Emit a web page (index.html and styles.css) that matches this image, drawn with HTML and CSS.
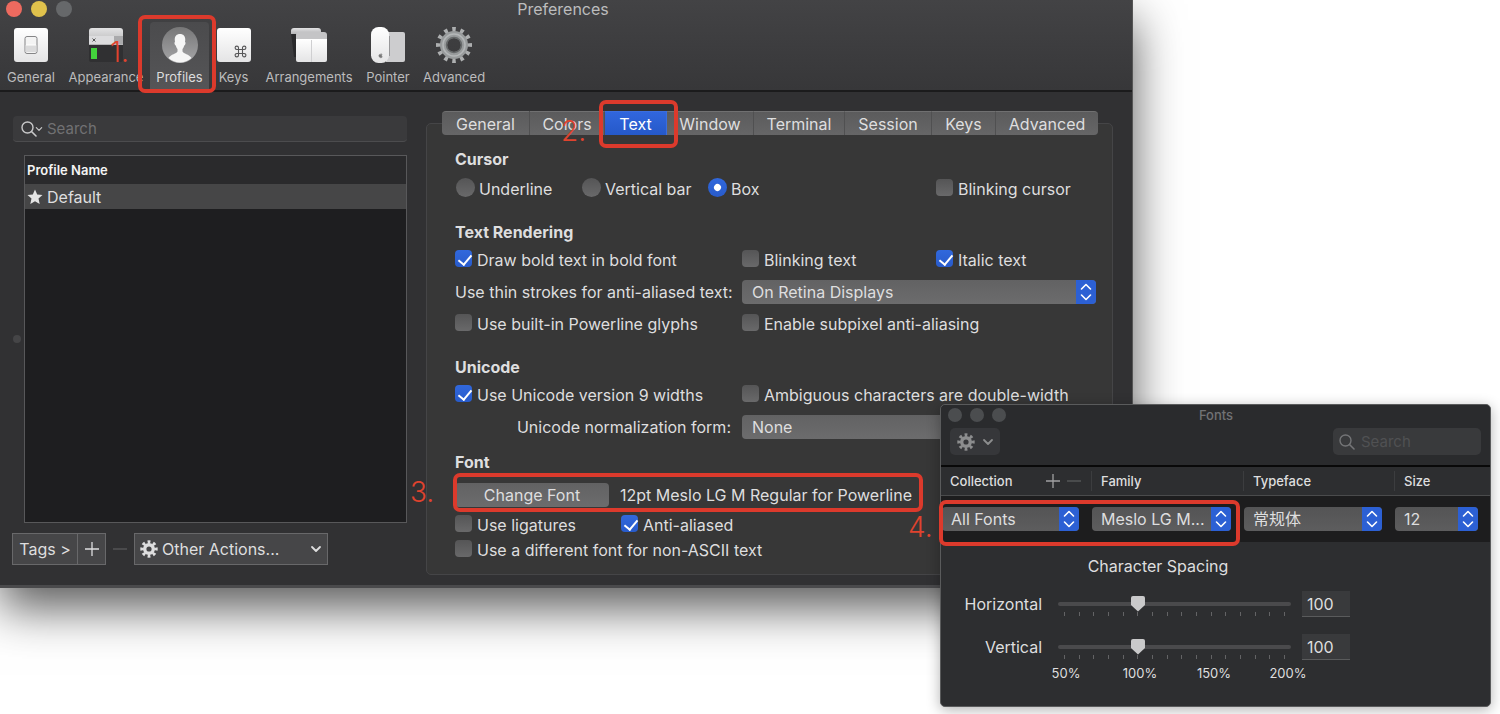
FILE: index.html
```html
<!DOCTYPE html>
<html lang="en">
<head>
<meta charset="utf-8">
<title>Preferences</title>
<link rel="stylesheet" href="styles.css">
</head>
<body>
<svg class="defs" aria-hidden="true">
  <symbol id="stepper" viewBox="0 0 20 24"><path d="M5.500 9 10 4.500l4.500 4.500M5.500 15 10 19.500l4.500-4.500" fill="none" stroke="#fff" stroke-width="1.600" stroke-linecap="round" stroke-linejoin="round"/></symbol>
  <symbol id="gear" viewBox="0 0 18 18"><circle cx="9" cy="9" r="7" fill="none" stroke="currentColor" stroke-width="3.400" pathLength="16" stroke-dasharray="1 1" stroke-dashoffset="0.500"/><circle cx="9" cy="9" r="4.300" fill="none" stroke="currentColor" stroke-width="3.400"/></symbol>
  <symbol id="chevron" viewBox="0 0 12 8"><path d="M2 2l4 4 4-4" fill="none" stroke="currentColor" stroke-width="1.800" stroke-linecap="round" stroke-linejoin="round"/></symbol>
  <symbol id="plus" viewBox="0 0 14 14"><path d="M7 0v14M0 7h14" stroke="currentColor" stroke-width="1.300"/></symbol>
  <symbol id="minus" viewBox="0 0 14 14"><path d="M0 7h14" stroke="currentColor" stroke-width="1.300"/></symbol>
  <symbol id="lens" viewBox="0 0 16 16"><circle cx="6.500" cy="6.500" r="5.500" fill="none" stroke="currentColor" stroke-width="1.400"/><path d="M10.500 10.500 15 15" stroke="currentColor" stroke-width="1.600" stroke-linecap="round"/></symbol>
  <linearGradient id="paper" x2="0" y2="1"><stop offset="0" stop-color="#fff"/><stop offset="1" stop-color="#e4e4e5"/></linearGradient>
  <linearGradient id="bar" x2="0" y2="1"><stop offset="0" stop-color="#e2e2e3"/><stop offset="1" stop-color="#b4b4b6"/></linearGradient>
  <linearGradient id="disc" x2="0" y2="1"><stop offset="0" stop-color="#777778"/><stop offset="1" stop-color="#a5a5a7"/></linearGradient>
</svg>

<main class="desktop">
  <section class="prefs" aria-label="Preferences">
    <header class="prefs-head">
      <div class="titlebar">
        <span class="lights"><i class="light close"></i><i class="light minimize"></i><i class="light"></i></span>
        <h1>Preferences</h1>
      </div>
      <nav class="toolbar">
        <button class="tool"><svg viewBox="0 0 36 36"><rect x="1" y="1" width="34" height="34" rx="3" fill="url(#paper)"/><rect x="12" y="9.500" width="12" height="17" rx="2" fill="#f3f3f3" stroke="#858587" stroke-width="1"/><path d="M12.500 18h11v7h-11z" fill="#dadadb"/><path d="M13 18h10" stroke="#fff"/></svg>General</button>
        <button class="tool"><svg viewBox="0 0 36 36"><path d="M1 17h34v16a2 2 0 0 1-2 2H3a2 2 0 0 1-2-2z" fill="#303032"/><path d="M1 4a3 3 0 0 1 3-3h28a3 3 0 0 1 3 3v14H1z" fill="url(#bar)"/><path d="M1 9h34v8H1z" fill="#dcdcde"/><path d="M26 9h9v8h-9z" fill="#aaaaac"/><path d="m4.500 11.500 3 3m0-3-3 3" stroke="#555"/><path d="M3 21h6v11H3z" fill="#43d33c"/></svg>Appearance</button>
        <button class="tool active"><svg viewBox="0 0 36 36"><circle cx="18" cy="18" r="18" fill="url(#disc)"/><path d="M18 7c-4 0-6 3-5 8-1 0-.5 3 .8 3.500.4 2 1.200 2.800 1.700 3.500v2.500C14.500 27 9 27 6.500 31a17 17 0 0 0 23 0C27 27 21.500 27 20.500 24.500V22c.6-.8 1.300-1.500 1.700-3.500 1.300-.5 1.800-3.500.8-3.500 1-5-1-8-5-8z" fill="#f6f6f6"/></svg>Profiles<span class="mark mark-profiles"></span><span class="step step-one">1.</span></button>
        <button class="tool"><svg viewBox="0 0 36 36"><rect x="1" y="1" width="34" height="34" rx="3" fill="url(#paper)"/><path d="M22.500 22.500h4v4h-4zM22.500 22.500h-1.700a1.700 1.700 0 1 1 1.700-1.700zM26.500 22.500v-1.700a1.700 1.700 0 1 1 1.700 1.700zM26.500 26.500h1.700a1.700 1.700 0 1 1-1.700 1.700zM22.500 26.500v1.700a1.700 1.700 0 1 1-1.700-1.700z" fill="none" stroke="#565658" stroke-width="1.100"/></svg>Keys</button>
        <button class="tool"><svg viewBox="0 0 36 36"><path d="M0 6h8v24H3z" fill="#29292b"/><path d="M0 7V4a3 3 0 0 1 3-3h24a3 3 0 0 1 3 3v3z" fill="url(#bar)"/><path d="M5 13V8a3 3 0 0 1 3-3h25a3 3 0 0 1 3 3v5z" fill="#c4c4c6"/><path d="M5 12h31v21a2 2 0 0 1-2 2H7a2 2 0 0 1-2-2z" fill="url(#paper)"/><path d="M20.500 13v22" stroke="#cfcfd1"/></svg>Arrangements</button>
        <button class="tool"><svg viewBox="0 0 36 36"><path d="M16 5h17a2 2 0 0 1 2 2v26a2 2 0 0 1-2 2H16z" fill="#cdcdcf"/><rect x="1" y="0" width="18" height="36" rx="7.500" fill="url(#paper)"/><path d="M19.500 9v20" stroke="#98989a" stroke-width="1"/><path d="M9.500 27.500c1 .3 1.600-.3 2.600 0-.8 1-.6 1.600.2 2.200-.8 1.600-1.800 1.400-3.200 0-.4-1.200-.2-1.900.4-2.200zM10.800 27l.6-1" fill="#777" stroke="#777" stroke-width=".5"/></svg>Pointer</button>
        <button class="tool"><svg viewBox="0 0 36 36"><circle cx="18" cy="18" r="15.500" fill="none" stroke="#adafb0" stroke-width="5" pathLength="36" stroke-dasharray="1.300 1.700" stroke-dashoffset="0.650"/><circle cx="18" cy="18" r="10.500" fill="none" stroke="#989b9c" stroke-width="7"/><circle cx="18" cy="18" r="11" fill="none" stroke="#b4b7b8" stroke-width="1.500"/><circle cx="18" cy="18" r="7.500" fill="none" stroke="#66696a" stroke-width="1.500"/></svg>Advanced</button>
      </nav>
    </header>

    <div class="prefs-body">
      <aside class="sidebar">
        <label class="search"><svg class="lens"><use href="#lens"/></svg><svg class="caret"><use href="#chevron"/></svg><input type="search" placeholder="Search" aria-label="Search profiles"></label>
        <div class="profiles-wrap">
          <span class="grip"></span>
          <div class="profiles">
            <table>
              <thead><tr><th>Profile Name</th></tr></thead>
              <tbody><tr><td><span class="profile"><svg viewBox="0 0 16 16"><path d="m8 .5 2.200 5 5.300.5-4 3.600 1.200 5.400L8 12.200 3.300 15l1.200-5.400L.5 6l5.300-.5z" fill="#e4e4e4"/></svg>Default</span></td></tr></tbody>
            </table>
          </div>
        </div>
        <div class="actions">
          <button class="flat tags">Tags &gt;</button>
          <button class="flat icon" aria-label="Add profile"><svg><use href="#plus"/></svg></button>
          <button class="flat icon off" aria-label="Remove profile" disabled><svg><use href="#minus"/></svg></button>
          <button class="flat other"><svg class="gear"><use href="#gear"/></svg><span>Other Actions...</span><svg class="caret"><use href="#chevron"/></svg></button>
        </div>
      </aside>

      <section class="panel">
        <nav class="tabs">
          <button>General</button><button>Colors</button><button class="selected">Text<span class="mark mark-text"></span><span class="step step-two">2.</span></button><button>Window</button><button>Terminal</button><button>Session</button><button>Keys</button><button>Advanced</button>
        </nav>
        <form class="settings">
          <h2>Cursor</h2>
          <div class="row">
            <div class="radios">
              <label class="check"><input type="radio" name="cursor">Underline</label>
              <label class="check"><input type="radio" name="cursor">Vertical bar</label>
              <label class="check"><input type="radio" name="cursor" checked>Box</label>
            </div>
            <label class="check"><input type="checkbox">Blinking cursor</label>
          </div>

          <h2 class="spaced">Text Rendering</h2>
          <div class="row">
            <label class="check"><input type="checkbox" checked>Draw bold text in bold font</label>
            <label class="check"><input type="checkbox">Blinking text</label>
            <label class="check"><input type="checkbox" checked>Italic text</label>
          </div>
          <div class="row">
            <label class="caption" for="strokes">Use thin strokes for anti-aliased text:</label>
            <span class="select wide"><select id="strokes"><option>On Retina Displays</option></select><svg><use href="#stepper"/></svg></span>
          </div>
          <div class="row">
            <label class="check"><input type="checkbox">Use built-in Powerline glyphs</label>
            <label class="check double"><input type="checkbox">Enable subpixel anti-aliasing</label>
          </div>

          <h2 class="spaced">Unicode</h2>
          <div class="row">
            <label class="check"><input type="checkbox" checked>Use Unicode version 9 widths</label>
            <label class="check double"><input type="checkbox">Ambiguous characters are double-width</label>
          </div>
          <div class="row">
            <label class="caption" for="normal">Unicode normalization form:</label>
            <span class="select wide"><select id="normal"><option>None</option></select><svg><use href="#stepper"/></svg></span>
          </div>

          <h2 class="font-title">Font</h2>
          <div class="font-row">
            <button type="button" class="change">Change Font</button><span>12pt Meslo LG M Regular for Powerline</span>
            <span class="mark mark-font"></span><span class="step step-three">3.</span>
          </div>
          <div class="font-options">
            <label class="check"><input type="checkbox">Use ligatures</label>
            <label class="check"><input type="checkbox" checked>Anti-aliased</label>
            <label class="check full"><input type="checkbox">Use a different font for non-ASCII text</label>
          </div>
        </form>
      </section>
    </div>
  </section>

  <section class="fonts" aria-label="Fonts">
    <header class="fonts-head">
      <div class="fonts-title"><span class="lights"><i class="light"></i><i class="light"></i><i class="light"></i></span><h2>Fonts</h2></div>
      <div class="fonts-tools">
        <button class="gear-menu" aria-label="Font actions"><svg class="gear"><use href="#gear"/></svg><svg class="caret"><use href="#chevron"/></svg></button>
        <label class="font-search"><svg class="lens"><use href="#lens"/></svg><input type="search" placeholder="Search" aria-label="Search fonts"></label>
      </div>
    </header>
    <div class="columns heads">
      <div class="head"><label for="collection">Collection</label><span class="pm"><svg><use href="#plus"/></svg><svg class="dim"><use href="#minus"/></svg></span></div>
      <div class="head"><label for="family">Family</label></div>
      <div class="head"><label for="typeface">Typeface</label></div>
      <div class="head"><label for="size">Size</label></div>
    </div>
    <div class="columns picks">
      <span class="select"><select id="collection"><option>All Fonts</option></select><svg><use href="#stepper"/></svg></span>
      <span class="select"><select id="family"><option>Meslo LG M...</option></select><svg><use href="#stepper"/></svg></span>
      <span class="select"><select id="typeface"><option>常规体</option></select><svg><use href="#stepper"/></svg></span>
      <span class="select"><select id="size"><option>12</option></select><svg><use href="#stepper"/></svg></span>
      <span class="mark mark-picks"></span><span class="step step-four">4.</span>
    </div>
    <div class="spacing">
      <h3>Character Spacing</h3>
      <label for="hs">Horizontal</label>
      <div class="slider"><input id="hs" type="range" min="50" max="200" value="100"><div class="ticks"><i></i><i></i><i></i><i></i><i></i><i></i><i></i><i></i><i></i><i></i><i></i><i></i><i></i><i></i><i></i><i></i></div></div>
      <input class="number" type="text" value="100" aria-label="Horizontal percent">
      <label for="vs">Vertical</label>
      <div class="slider"><input id="vs" type="range" min="50" max="200" value="100"><div class="ticks"><i></i><i></i><i></i><i></i><i></i><i></i><i></i><i></i><i></i><i></i><i></i><i></i><i></i><i></i><i></i><i></i></div></div>
      <input class="number" type="text" value="100" aria-label="Vertical percent">
      <div class="scale"><span>50%</span><span>100%</span><span>150%</span><span>200%</span></div>
    </div>
  </section>
</main>
</body>
</html>
```

FILE: styles.css
```css
* { box-sizing: border-box; }
body {
  margin: 0;
  background: #fff;
  color: #dededf;
  font: 16px/20px Inter, "Noto Sans CJK SC", sans-serif;
}
button, input, select { font: inherit; color: inherit; margin: 0; padding: 0; border: 0; background: none; }
button { white-space: nowrap; }
h1, h2, h3 { margin: 0; font-size: 16px; line-height: 20px; }
svg { display: block; flex: none; }
input::-webkit-search-cancel-button { display: none; }
.defs { position: absolute; width: 0; height: 0; }
.desktop { position: relative; min-height: 100vh; overflow: hidden; }

/* Preferences window */
.prefs {
  margin-right: 367px;
  background: #313133;
  border-right: 1px solid #555;
  border-bottom: 3px solid #4a4a4c;
  box-shadow: 0 20px 45px rgba(0, 0, 0, .65);
}
.prefs-head {
  background: linear-gradient(#434345, #373739);
  border-bottom: 2px solid #1b1b1c;
}
.titlebar { display: grid; grid-template-columns: 1fr auto 1fr; align-items: center; height: 20px; padding: 0 12px 2px 6px; }
.titlebar h1 { font-weight: 400; line-height: 18px; color: #bcbcbd; }
.lights { display: flex; gap: 9px; }
.light { width: 16px; height: 16px; border-radius: 50%; background: #66686a; }
.close { background: #ed6a5f; }
.minimize { background: #e0c24c; }
.toolbar { display: grid; grid-template-columns: 62px 88px 59px 49px 102px 56px 76px; height: 70px; padding-top: 2px; }
.tool {
  position: relative;
  display: flex;
  flex-direction: column;
  align-items: center;
  gap: 5px;
  padding-top: 5px;
  font-size: 13px;
  line-height: 18px;
  color: #bcbcbd;
}
.tool svg { width: 36px; height: 36px; }
.active { background: linear-gradient(#4b4b4d, #555557); border-radius: 4px 4px 0 0; color: #dcdcdd; z-index: 1; }

/* Numbered call-outs */
.mark { position: absolute; border: 4px solid #dc3a2c; border-radius: 7px; pointer-events: none; z-index: 2; }
.step { position: absolute; color: #e0432e; font-size: 28px; font-weight: 300; line-height: 28px; z-index: 3; }
.mark-profiles { inset: -7px -7px -3px -12px; }
.step-one { left: -40px; top: 16px; }
.mark-text { inset: -12px -12px -13px -6px; }
.step-two { left: -44px; top: 5px; }
.mark-font { left: -2px; top: -10px; width: 470px; height: 39px; }
.step-three { left: -45px; top: -5px; }
.mark-picks { left: -2px; top: 4px; width: 301px; height: 46px; }
.step-four { left: -33px; top: 17px; }

/* Sidebar */
.prefs-body { display: grid; grid-template-columns: 394px minmax(0, 1fr); gap: 19px; padding: 19px 19px 10px 13px; }
.sidebar { display: flex; flex-direction: column; padding-top: 5px; }
.search { display: flex; align-items: center; height: 26px; padding-left: 8px; border-radius: 4px; background: #3a3a3c; border-bottom: 1px solid #4c4c4e; }
.lens { width: 16px; height: 16px; color: #c8c8c9; }
.search .caret { width: 8px; height: 6px; margin-left: -2px; color: #c8c8c9; }
.search input { flex: 1; min-width: 0; margin-left: 4px; outline: 0; font-size: 15px; }
input::placeholder { color: #717173; }
.profiles-wrap { display: flex; flex: 1; align-items: center; gap: 3px; margin-top: 13px; }
.grip { width: 8px; height: 8px; border-radius: 50%; background: #454547; }
.profiles { flex: 1; align-self: stretch; background: #1e1e20; border: 1px solid #58585a; }
table { width: 100%; border-collapse: collapse; }
th { height: 28px; padding: 0 2px; background: #2a2a2c; color: #f4f4f4; font-size: 13px; font-weight: 600; text-align: left; }
td { height: 25px; padding: 0 2px; background: #464647; }
.profile { display: flex; align-items: center; gap: 4px; }
.profile svg { width: 16px; height: 16px; }
.actions { display: flex; height: 32px; margin: 10px 0 10px -1px; }
.flat { display: flex; align-items: center; justify-content: center; background: #464648; border: 1px solid #68686a; }
.tags { width: 66px; font-size: 16px; }
.icon { width: 29px; margin-left: -1px; }
.icon svg { width: 14px; height: 14px; }
.off { width: 28px; margin: 0; border: 0; background: none; color: #58585a; }
.other { width: 194px; padding: 0 5px; gap: 4px; }
.other span { flex: 1; text-align: left; }
.gear { width: 18px; height: 18px; }
.caret { width: 12px; height: 8px; }

/* Settings panel */
.panel { margin-top: 12px; border: 1px solid #454547; border-radius: 5px; background: #373737; }
.tabs { display: grid; grid-template-columns: 88fr 75fr 62fr 87fr 91fr 87fr 64fr 102fr; height: 24px; margin: -13px 14px 0 15px; }
.tabs button { position: relative; background: linear-gradient(#5b5b5c, #666667); border-top: 1px solid #707071; border-right: 1px solid #505051; }
.tabs button:first-child { border-radius: 4px 0 0 4px; }
.tabs button:last-child { border-radius: 0 4px 4px 0; border-right: 0; }
.tabs .selected { background: linear-gradient(#3166dd, #2559c9); border-color: #3a6ee0; color: #fff; z-index: 2; }
.settings { padding: 14px 16px 14px 28px; }
.settings h2 { font-weight: 700; }
.settings .spaced { margin-top: 23px; }
.settings .font-title { margin-top: 13px; }
.row { display: grid; grid-template-columns: 287px 194px minmax(0, 1fr); align-items: center; margin-top: 10px; }
.row .radios { display: grid; grid-template-columns: 126px 126px 1fr; grid-column: span 2; padding-left: 1px; }
.row .double, .row .wide { grid-column: span 2; }
h2 + .row { margin-top: 8px; }
h2:first-child + .row { margin-top: 10px; }
.check { display: flex; align-items: center; gap: 5px; height: 20px; white-space: nowrap; }
.check input { position: relative; flex: none; width: 17px; height: 17px; margin-bottom: 3px; appearance: none; border-radius: 4px; background: linear-gradient(#555556, #69696a); }
.check input[type="radio"] { width: 19px; height: 19px; border-radius: 50%; }
.radios .check { gap: 4px; }
.check input:checked { background: linear-gradient(#3168dc, #285bcb); }
.check input:checked::before { content: ""; position: absolute; left: 6px; top: 2px; width: 6px; height: 11px; border: solid #fff; border-width: 0 2px 2px 0; transform: rotate(40deg); }
.check input[type="radio"]:checked::before { left: 6px; top: 6px; width: 7px; height: 7px; border: 0; border-radius: 50%; background: #fff; }
.caption { padding-right: 11px; text-align: right; white-space: nowrap; }
.select { display: grid; grid-template-columns: minmax(0, 1fr) 20px; height: 24px; overflow: hidden; border-radius: 4px; background: linear-gradient(#626263, #6c6c6d); }
.select select { grid-area: 1 / 1 / 2 / 3; width: 100%; padding: 0 20px 0 10px; appearance: none; line-height: 24px; outline: 0; }
.select option { background: #373737; }
.select svg { grid-area: 1 / 2; width: 20px; height: 24px; background: #2c60d4; pointer-events: none; }
.font-row { position: relative; display: flex; align-items: center; gap: 11px; margin-top: 11px; white-space: nowrap; }
.change { width: 154px; height: 24px; border-radius: 4px; background: linear-gradient(#626263, #6c6c6d); }
.font-options { display: grid; grid-template-columns: 166px 1fr; row-gap: 5px; margin-top: 8px; }
.full { grid-column: span 2; }

/* Fonts window */
.fonts {
  position: absolute;
  right: 9px;
  top: 404px;
  width: 551px;
  padding-bottom: 23px;
  border: 1px solid #5a5b5c;
  border-radius: 5px;
  background: #2d2e30;
  box-shadow: 0 3px 14px rgba(0, 0, 0, .3);
}
.fonts-head { height: 62px; background: #2a2b2d; border-bottom: 2px solid #090909; border-radius: 5px 5px 0 0; }
.fonts-title { display: grid; grid-template-columns: 1fr auto 1fr; align-items: center; height: 20px; padding: 0 6px 0 7px; }
.fonts-title h2 { font-size: 13px; font-weight: 500; color: #717274; }
.fonts .lights { gap: 8px; }
.fonts .light { width: 14px; height: 14px; background: #4b4d4f; }
.fonts-tools { display: flex; justify-content: space-between; padding: 3px 9px 0; }
.gear-menu { display: flex; align-items: center; justify-content: center; gap: 7px; width: 50px; height: 27px; border-radius: 5px; background: #36373a; color: #8c8d8e; }
.font-search { display: flex; align-items: center; gap: 6px; width: 148px; height: 27px; padding-left: 6px; border-radius: 5px; background: #393a3c; }
.font-search .lens { color: #747577; }
.font-search input { min-width: 0; width: 100%; font-size: 15px; outline: 0; }
.font-search input::placeholder { color: #505153; }
.columns { position: relative; display: grid; grid-template-columns: 150px 152px 151px minmax(0, 1fr); }
.heads { height: 29px; align-items: center; border-bottom: 1px solid #4a4b4c; }
.head { display: flex; justify-content: space-between; padding: 0 10px 0 9px; font-size: 13px; font-weight: 500; }
.head + .head { border-left: 1px solid #3c3d3f; }
.pm { display: flex; align-items: center; gap: 7px; }
.pm svg { width: 14px; height: 14px; color: #a0a0a1; }
.pm .dim { color: #5a5b5c; }
.picks { padding: 11px 0; background: #1d1d1e; }
.picks .select { margin: 0 12px 0 1px; background: linear-gradient(#545455, #5d5d5e); }
.picks .select select { padding-left: 9px; }
.spacing { display: grid; grid-template-columns: 101px 233px 48px; column-gap: 16px; align-items: center; margin-top: 14px; }
.spacing h3 { grid-column: 1 / 4; margin: 0 0 6px 20px; font-weight: 400; text-align: center; }
.spacing label { text-align: right; }
.number { justify-self: start; width: 48px; height: 26px; margin: 9px 0 8px -5px; padding-left: 5px; background: #393a3c; border-bottom: 1px solid #5a5b5c; outline: 0; }
.slider { display: grid; padding-top: 4px; }
.slider input { width: 100%; height: 16px; appearance: none; outline: 0; }
.slider input::-webkit-slider-runnable-track { height: 4px; border-radius: 2px; background: #4a4a4c; }
.slider input::-webkit-slider-thumb { appearance: none; width: 14px; height: 16px; margin-top: -6px; background: #c9c9ca; border-radius: 2px; clip-path: polygon(0 0, 100% 0, 100% 60%, 50% 100%, 0 60%); }
.ticks { display: flex; justify-content: space-between; padding: 0 6px; }
.ticks i { width: 1px; height: 4px; background: #636365; }
.scale { grid-column: 2 / 4; display: grid; grid-template-columns: repeat(4, 74px); margin: -5px 0 0 -29px; font-size: 13px; text-align: center; }
```
